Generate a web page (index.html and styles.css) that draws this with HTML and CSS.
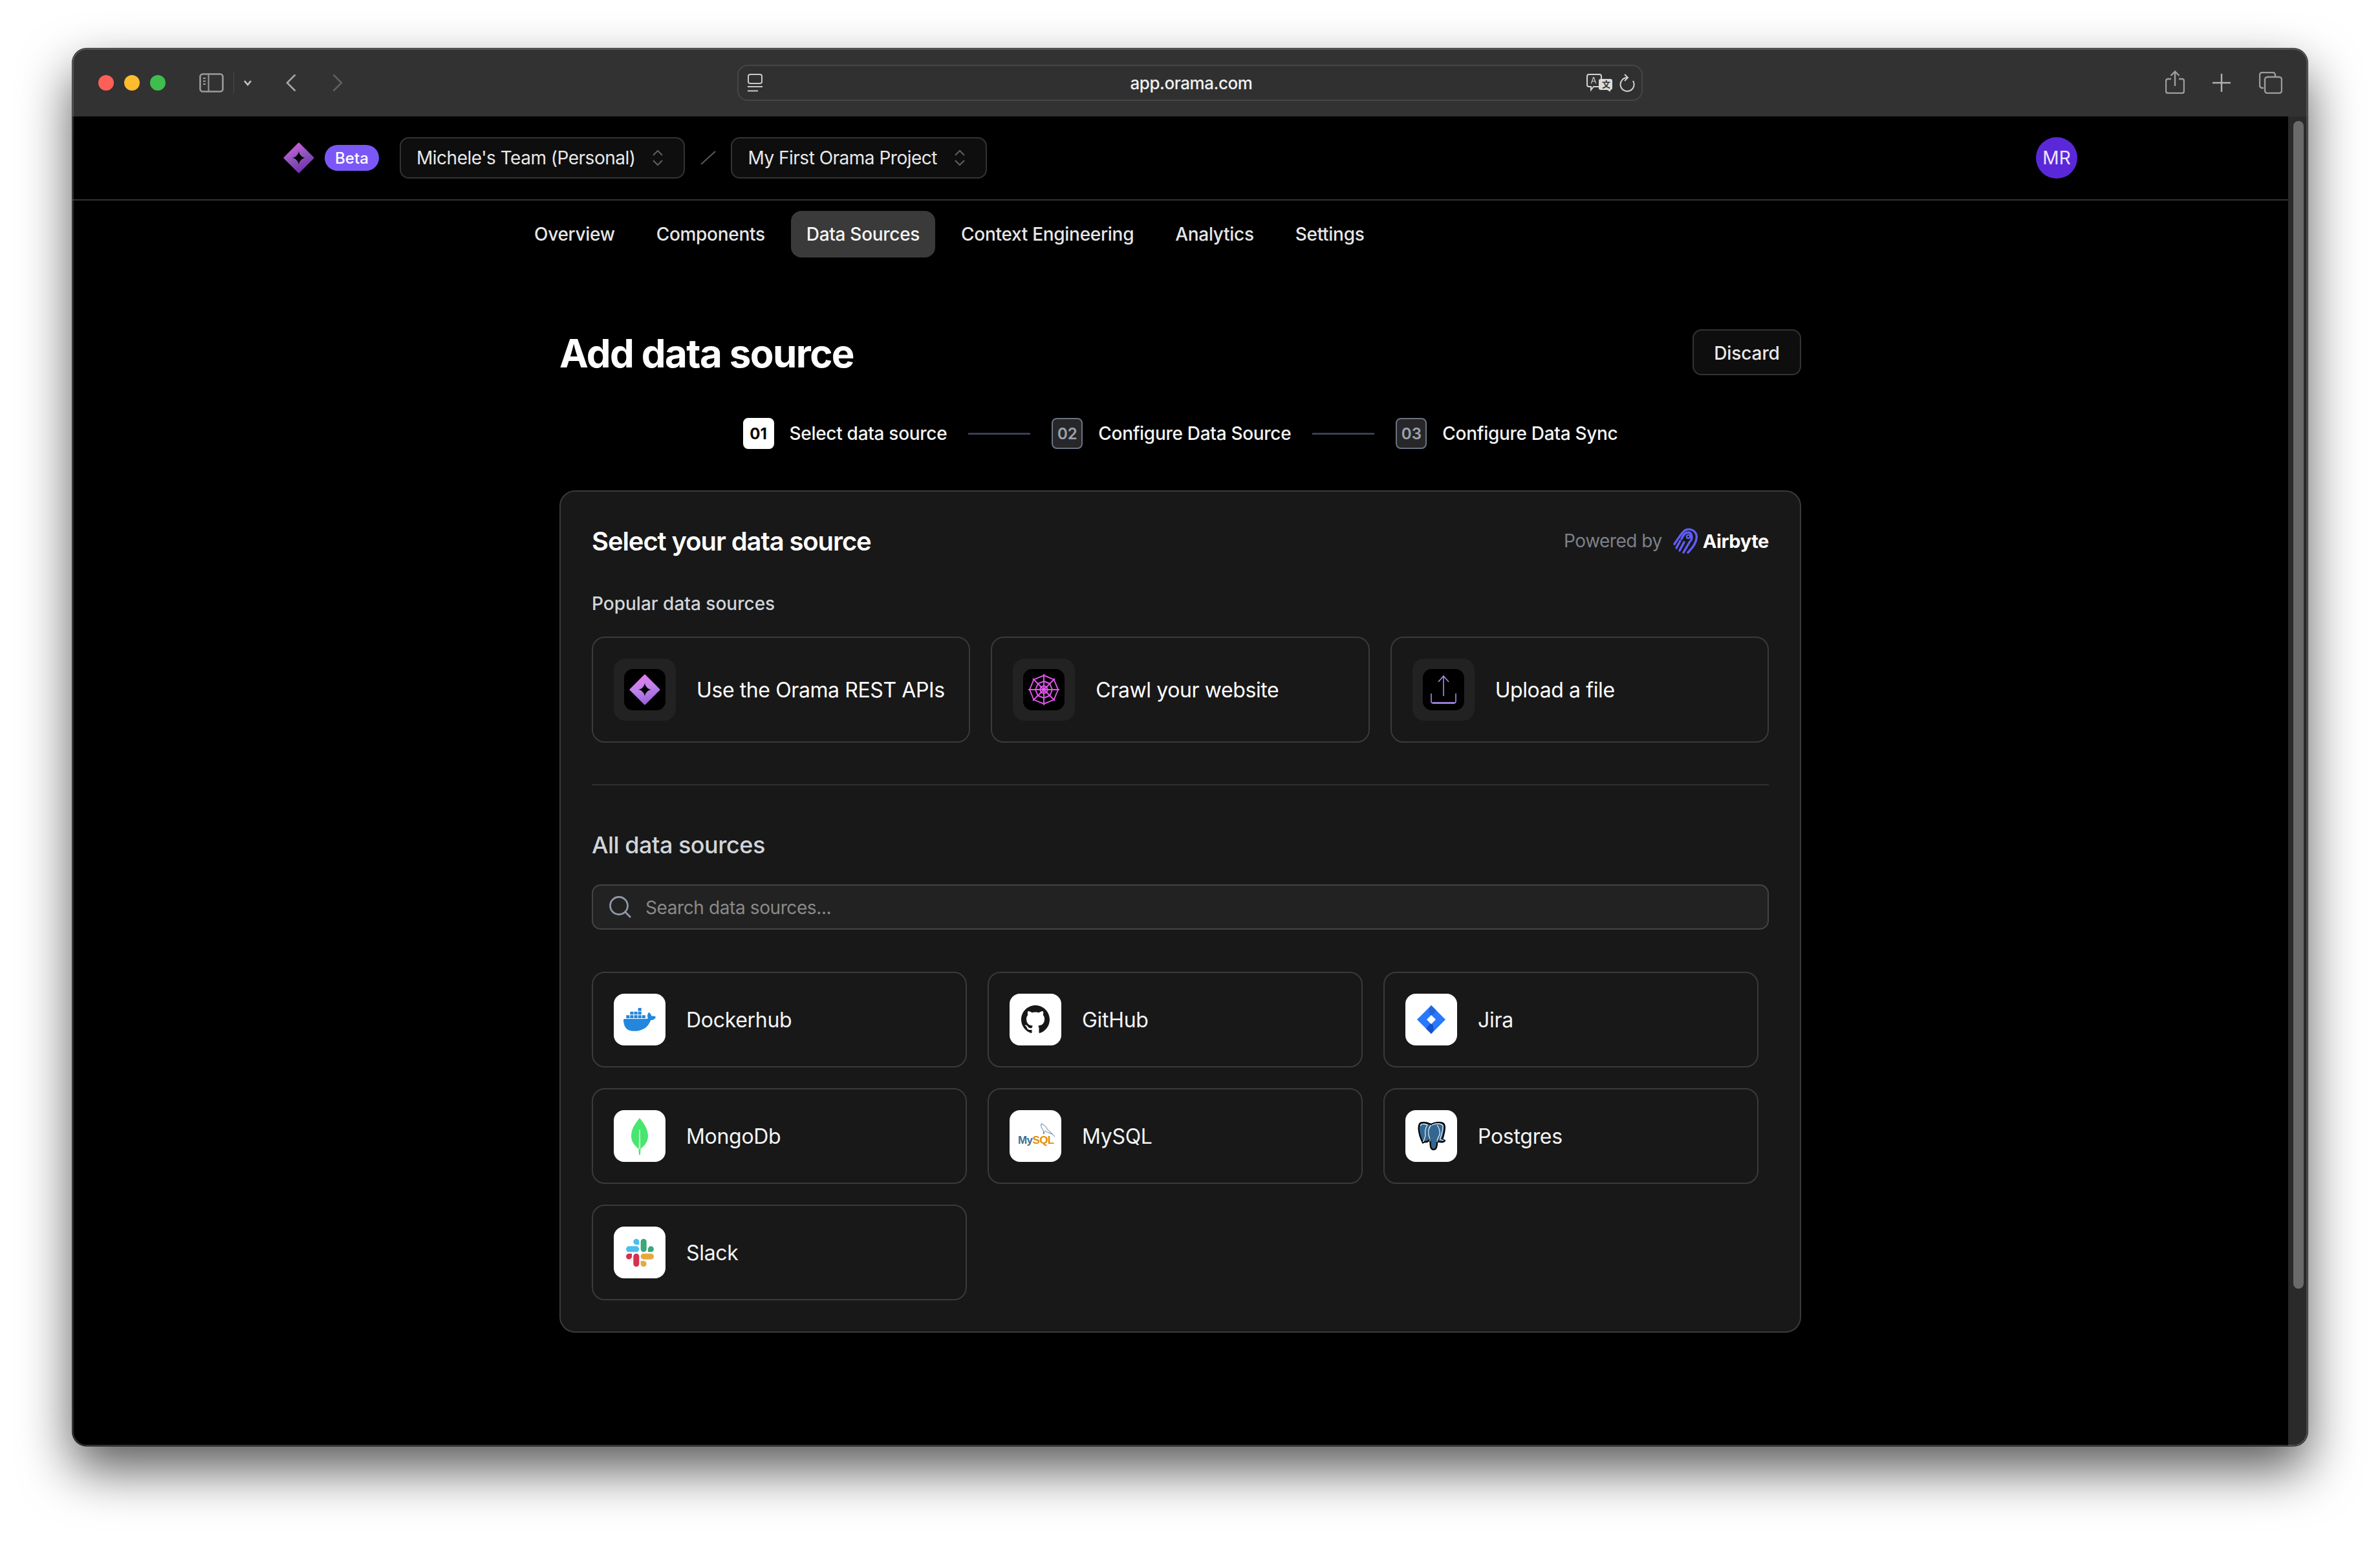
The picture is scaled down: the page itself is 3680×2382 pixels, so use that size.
FILE: index.html
```html
<!DOCTYPE html>
<html lang="en">
<head>
<meta charset="utf-8">
<title>Add data source</title>
<link rel="stylesheet" href="styles.css">
</head>
<body>
<svg class="defs" width="0" height="0" aria-hidden="true">
  <defs>
    <linearGradient id="oramaDark" x1="0.2" y1="0" x2="0.7" y2="1">
      <stop offset="0" stop-color="#dc5fe6"/><stop offset="0.5" stop-color="#8a55b8"/><stop offset="1" stop-color="#7428b0"/>
    </linearGradient>
    <linearGradient id="oramaLight" x1="0.3" y1="0" x2="0.6" y2="1">
      <stop offset="0" stop-color="#ec78f2"/><stop offset="0.5" stop-color="#bb84e8"/><stop offset="1" stop-color="#9a5cdc"/>
    </linearGradient>
  </defs>
</svg>
<div class="window">
  <div class="toolbar">
    <div class="tool-left">
      <div class="lights"><span class="light red"></span><span class="light yellow"></span><span class="light green"></span></div>
      <svg class="ic-sidebar" viewBox="0 0 38 30" fill="none" stroke="#9b9b9b"><rect x="1.5" y="1.5" width="35" height="27" rx="4" stroke-width="2.6"/><path d="M14.5 2v26" stroke-width="2"/><path d="M6 8h4M6 12.5h4M6 17h4" stroke-width="2"/></svg>
      <span class="tool-sep"></span>
      <svg class="ic-caret" viewBox="0 0 14 10" fill="none" stroke="#c4c4c4" stroke-width="2.6"><path d="M2 2l5 6 5-6"/></svg>
      <svg class="ic-back" viewBox="0 0 16 28" fill="none" stroke="#a6a6a6" stroke-width="2.6"><path d="M14.5 1.5L2 14l12.5 12.5"/></svg>
      <svg class="ic-forward" viewBox="0 0 16 28" fill="none" stroke="#5f5f5f" stroke-width="2.6"><path d="M1.5 1.5L14 14 1.5 26.5"/></svg>
    </div>
    <div class="address">
      <svg class="ic-page" viewBox="0 0 23 28" fill="none" stroke="#c9c9c9" stroke-width="2"><rect x="1" y="1" width="21" height="14" rx="3"/><path d="M0 20h23M0 26.500h16"/></svg>
      <span class="url">app.orama.com</span>
      <div class="addr-right">
        <svg class="ic-translate" viewBox="0 0 40 28"><path d="M4 1h16a3 3 0 0 1 3 3v13a3 3 0 0 1-3 3H11l-4 5v-5H4a3 3 0 0 1-3-3V4a3 3 0 0 1 3-3z" fill="#323232" stroke="#d4d4d4" stroke-width="2"/><text x="6.500" y="15" class="tr-a">A</text><path d="M22 8h15a3 3 0 0 1 3 3v11a3 3 0 0 1-3 3v3l-5-3h-10a3 3 0 0 1-3-3V11a3 3 0 0 1 3-3z" fill="#dcdcdc"/><text x="24" y="21" class="tr-b">文</text></svg>
        <svg class="ic-reload" viewBox="0 0 24 28" fill="none" stroke="#d0d0d0" stroke-width="2"><path d="M21 11A10.500 10.500 0 1 1 12 6"/><path d="M8 1l5 5-5 5"/></svg>
      </div>
    </div>
    <div class="tool-right">
      <svg class="ic-share" viewBox="0 0 30 36" fill="none" stroke="#9d9d9d" stroke-width="2.400"><path d="M9 13H4a3 3 0 0 0-3 3v16a3 3 0 0 0 3 3h22a3 3 0 0 0 3-3V16a3 3 0 0 0-3-3h-5"/><path d="M15 24V2M8.500 8L15 1.500 21.500 8"/></svg>
      <svg class="ic-plus" viewBox="0 0 28 28" fill="none" stroke="#b0b0b0" stroke-width="2.400"><path d="M14 0v28M0 14h28"/></svg>
      <svg class="ic-tabs" viewBox="0 0 36 34" fill="none" stroke="#9d9d9d" stroke-width="2.400"><path d="M7 25H5a4 4 0 0 1-4-4V5a4 4 0 0 1 4-4h16a4 4 0 0 1 4 4v2"/><rect x="9" y="8" width="26" height="25" rx="4"/></svg>
    </div>
  </div>

  <div class="viewport">
    <div class="main">
      <header class="topbar">
        <svg class="logo" viewBox="0 0 48 48"><path fill="url(#oramaDark)" fill-rule="evenodd" d="M22.500 1.500Q24 -.5 25.500 1.500L46.500 22.500Q48.500 24 46.500 25.500L25.500 46.500Q24 48.500 22.500 46.500L1.500 25.500Q-.5 24 1.500 22.500ZM24 13.500C24.500 19 29 23.500 34.500 24C29 24.500 24.500 29 24 34.500C23.500 29 19 24.500 13.500 24C19 23.500 23.500 19 24 13.500Z"/></svg>
        <span class="beta">Beta</span>
        <div class="select team">
          <span>Michele's Team (Personal)</span>
          <svg class="updown" viewBox="0 0 18 26" fill="none" stroke="#5d5d5d" stroke-width="2.200"><path d="M2 9l7-7 7 7M2 17l7 7 7-7"/></svg>
        </div>
        <svg class="slash" viewBox="0 0 24 22" fill="none" stroke="#5a5a5a" stroke-width="2"><path d="M1 21L23 1"/></svg>
        <div class="select">
          <span>My First Orama Project</span>
          <svg class="updown" viewBox="0 0 18 26" fill="none" stroke="#5d5d5d" stroke-width="2.200"><path d="M2 9l7-7 7 7M2 17l7 7 7-7"/></svg>
        </div>
        <span class="avatar">MR</span>
      </header>

      <nav class="nav">
        <a class="nav-item">Overview</a>
        <a class="nav-item">Components</a>
        <a class="nav-item active">Data Sources</a>
        <a class="nav-item">Context Engineering</a>
        <a class="nav-item">Analytics</a>
        <a class="nav-item">Settings</a>
      </nav>

      <div class="page">
        <div class="title-row">
          <h1>Add data source</h1>
          <button class="discard">Discard</button>
        </div>

        <div class="stepper">
          <span class="step-no current">01</span><span class="step-label">Select data source</span>
          <span class="step-line"></span>
          <span class="step-no">02</span><span class="step-label">Configure Data Source</span>
          <span class="step-line"></span>
          <span class="step-no">03</span><span class="step-label">Configure Data Sync</span>
        </div>

        <section class="panel">
          <div class="panel-head">
            <h2>Select your data source</h2>
            <div class="powered">
              <span>Powered by</span>
              <svg class="ic-airbyte" viewBox="0 0 40 40" fill="none" stroke="#615eff" stroke-width="3.400" stroke-linecap="round"><path d="M24 38C32 30 39 20 37 11C35 3 25 0 19 4C13 9 7 19 3 25"/><path d="M17 38L27 21"/><path d="M11 35L18 22"/><path d="M6 31L12 20"/><path d="M14 17C17 10 20 7 24 7C30 7 31 14 29 19"/><circle cx="24.500" cy="13.500" r="2.600" stroke-width="2.400"/></svg>
              <span class="airbyte">Airbyte</span>
            </div>
          </div>
          <h3 class="label">Popular data sources</h3>
          <div class="popular">
            <div class="pop-card">
              <div class="pop-icon"><div class="pop-inner">
                <svg class="glyph48" viewBox="0 0 48 48"><path fill="url(#oramaLight)" fill-rule="evenodd" d="M22.500 1.500Q24 -.5 25.500 1.500L46.500 22.500Q48.500 24 46.500 25.500L25.500 46.500Q24 48.500 22.500 46.500L1.500 25.500Q-.5 24 1.500 22.500ZM24 13.500C24.500 19 29 23.500 34.500 24C29 24.500 24.500 29 24 34.500C23.500 29 19 24.500 13.500 24C19 23.500 23.500 19 24 13.500Z"/></svg>
              </div></div>
              <span class="pop-text">Use the Orama REST APIs</span>
            </div>
            <div class="pop-card">
              <div class="pop-icon"><div class="pop-inner">
                <svg class="glyph48" viewBox="0 0 48 48" fill="none" stroke="#e257ef" stroke-width="1.900"><path d="M24 2L39.600 8.400 46 24 39.600 39.600 24 46 8.400 39.600 2 24 8.400 8.400Z"/><path d="M24 11L33.200 14.800 37 24 33.200 33.200 24 37 14.800 33.200 11 24 14.800 14.800Z"/><path d="M24 0V48M0 24H48M7 7L41 41M41 7L7 41"/><path d="M24 18L28.200 19.800 30 24 28.200 28.200 24 30 19.800 28.200 18 24 19.800 19.800Z"/></svg>
              </div></div>
              <span class="pop-text">Crawl your website</span>
            </div>
            <div class="pop-card">
              <div class="pop-icon"><div class="pop-inner">
                <svg class="glyph48" viewBox="0 0 48 48" fill="none" stroke="#a78bf0" stroke-width="1.600"><path d="M24 34V4M16 12L24 3L32 12"/><path d="M5 30V42a3 3 0 0 0 3 3H40a3 3 0 0 0 3-3V30"/><path d="M7 44.500H41" stroke-width="2.400"/></svg>
              </div></div>
              <span class="pop-text">Upload a file</span>
            </div>
          </div>

          <hr class="divider">

          <h3 class="all-title">All data sources</h3>
          <div class="search">
            <svg class="ic-search" viewBox="0 0 34 34" fill="none" stroke="#8f97a6" stroke-width="2.800"><circle cx="15" cy="15" r="13.500"/><path d="M25 25L33 33"/></svg>
            <span class="placeholder">Search data sources...</span>
          </div>

          <div class="sources">
            <div class="src-card">
              <div class="src-icon"><svg class="g-docker" viewBox="0 3.400 24 17.300"><path fill="#2387de" d="M13.983 11.078h2.119a.186.186 0 00.186-.185V9.006a.186.186 0 00-.186-.186h-2.119a.185.185 0 00-.185.185v1.888c0 .102.083.185.185.185m-2.954-5.43h2.118a.186.186 0 00.186-.186V3.574a.186.186 0 00-.186-.185h-2.118a.185.185 0 00-.185.185v1.888c0 .102.082.185.185.186m0 2.716h2.118a.187.187 0 00.186-.186V6.29a.186.186 0 00-.186-.185h-2.118a.185.185 0 00-.185.185v1.887c0 .102.082.185.185.186m-2.93 0h2.12a.186.186 0 00.184-.186V6.29a.185.185 0 00-.185-.185H8.1a.185.185 0 00-.185.185v1.887c0 .102.083.185.185.186m-2.964 0h2.119a.186.186 0 00.185-.186V6.29a.185.185 0 00-.185-.185H5.136a.186.186 0 00-.186.185v1.887c0 .102.084.185.186.186m5.893 2.715h2.118a.186.186 0 00.186-.185V9.006a.186.186 0 00-.186-.186h-2.118a.185.185 0 00-.185.185v1.888c0 .102.082.185.185.185m-2.93 0h2.12a.185.185 0 00.184-.185V9.006a.185.185 0 00-.184-.186h-2.12a.185.185 0 00-.184.185v1.888c0 .102.083.185.185.185m-2.964 0h2.119a.185.185 0 00.185-.185V9.006a.185.185 0 00-.184-.186h-2.12a.186.186 0 00-.186.186v1.887c0 .102.084.185.186.185m-2.92 0h2.12a.185.185 0 00.184-.185V9.006a.185.185 0 00-.184-.186h-2.12a.185.185 0 00-.184.185v1.888c0 .102.082.185.185.185M23.763 9.89c-.065-.051-.672-.51-1.954-.51-.338.001-.676.03-1.01.087-.248-1.7-1.653-2.53-1.716-2.566l-.344-.199-.226.327c-.284.438-.49.922-.612 1.43-.23.97-.09 1.882.403 2.661-.595.332-1.55.413-1.744.42H.751a.751.751 0 00-.75.748 11.376 11.376 0 00.692 4.062c.545 1.428 1.355 2.48 2.41 3.124 1.18.723 3.1 1.137 5.275 1.137.983.003 1.963-.086 2.93-.266a12.248 12.248 0 003.823-1.389c.98-.567 1.86-1.288 2.61-2.136 1.252-1.418 1.998-2.997 2.553-4.4h.221c1.372 0 2.215-.549 2.68-1.009.309-.293.55-.65.707-1.046l.098-.288Z"/></svg></div>
              <span class="src-text">Dockerhub</span>
            </div>
            <div class="src-card">
              <div class="src-icon"><svg class="g-github" viewBox="0 0 16 16"><path fill="#181717" d="M8 0C3.580 0 0 3.580 0 8c0 3.540 2.290 6.530 5.470 7.590.4.070.55-.170.55-.380 0-.190-.010-.820-.010-1.490-2.010.370-2.530-.490-2.690-.940-.090-.230-.480-.940-.820-1.130-.280-.150-.680-.520-.010-.530.630-.010 1.080.580 1.230.820.720 1.210 1.870.870 2.330.660.070-.520.280-.870.510-1.070-1.780-.200-3.640-.890-3.640-3.950 0-.870.310-1.590.820-2.150-.080-.200-.360-1.020.080-2.120 0 0 .670-.210 2.200.820.640-.180 1.320-.270 2-.270.680 0 1.360.090 2 .270 1.530-1.040 2.200-.820 2.200-.820.440 1.100.160 1.920.080 2.120.510.560.820 1.270.820 2.150 0 3.070-1.870 3.750-3.650 3.950.290.250.540.730.540 1.480 0 1.070-.010 1.930-.010 2.200 0 .210.150.460.550.380A8.013 8.013 0 0016 8c0-4.420-3.580-8-8-8z"/></svg></div>
              <span class="src-text">GitHub</span>
            </div>
            <div class="src-card">
              <div class="src-icon"><svg class="g-jira" viewBox="0 0 44 44"><path fill="#2979ff" d="M22 0L44 22 22 44 0 22Z"/><path fill="#2267de" d="M22 0C17 5 17 11 22 16.500L27 12 30 8Z"/><path fill="#1650c8" d="M22 44C27 39 27 33 22 27.500L17 32 14 36Z"/><path fill="#fff" d="M22 15L29 22 22 29 15 22Z"/></svg></div>
              <span class="src-text">Jira</span>
            </div>
            <div class="src-card">
              <div class="src-icon"><svg class="g-mongo" viewBox="0 0 26 57"><path fill="#47e66f" d="M13 0C16 5 26 14 26 28C26 38 19 44 14.500 48L14 57H12L11.500 48C7 44 0 38 0 28C0 14 10 5 13 0Z"/><path fill="#c6f6d0" d="M12.200 18H13.800L14.300 47L13 49L11.700 47Z"/></svg></div>
              <span class="src-text">MongoDb</span>
            </div>
            <div class="src-card">
              <div class="src-icon src-mysql">
                <svg class="g-dolphin" viewBox="0 0 23 22" fill="none" stroke="#3e6e93" stroke-width="0.900"><path d="M1 1C5 2 8 5 10 9C12 13 17 14 18 17C19 18 21 20 22 21M1 1C0 5 2 9 4 11C5 13 4 15 5 17C5 14 7 12 8 12C9 14 13 15 18 17"/></svg>
                <span class="mysql-word"><span class="my">My</span><span class="sql">SQL</span></span>
              </div>
              <span class="src-text">MySQL</span>
            </div>
            <div class="src-card">
              <div class="src-icon"><svg class="g-pg" viewBox="0 0 43 44"><path fill="#336791" stroke="#000" stroke-width="2.200" d="M4 2C11-.5 17 2.500 21 4C27 .5 38-.5 41 4C43.500 9 40 22 38 27L42 29C41 31.500 36 31.500 33 31L31 29.500L30 33C30 38 28.500 43 24.500 43C20.500 43 19.500 38 19.500 33L19 27.500C15 32 12.500 31.500 11 31L8 32.500L6 28C3 22-1 7 4 2Z"/><path fill="none" stroke="#fff" stroke-width="1.100" d="M4 6C6 3 11 2.500 15 5C12 9 11 15 12 22M21 5C17 9 16 14 17 20C18 25 20 26 19 30M22 5C28 2 36 2 39 6C39 12 37 20 35 25C34 28 36 28 40 28.500M30 5C33 9 35 14 34 20C32 24 30 26 30 31M12 22C10 25 11 29 8 31"/></svg></div>
              <span class="src-text">Postgres</span>
            </div>
            <div class="src-card">
              <div class="src-icon"><svg class="g-slack" viewBox="0 0 24 24"><path fill="#d6304f" d="M5.042 15.165a2.528 2.528 0 0 1-2.520 2.523A2.528 2.528 0 0 1 0 15.165a2.527 2.527 0 0 1 2.522-2.520h2.520v2.520zM6.313 15.165a2.527 2.527 0 0 1 2.521-2.520 2.527 2.527 0 0 1 2.521 2.520v6.313A2.528 2.528 0 0 1 8.834 24a2.528 2.528 0 0 1-2.521-2.522v-6.313z"/><path fill="#4bbdf0" d="M8.834 5.042a2.528 2.528 0 0 1-2.521-2.520A2.528 2.528 0 0 1 8.834 0a2.528 2.528 0 0 1 2.521 2.522v2.520H8.834zM8.834 6.313a2.528 2.528 0 0 1 2.521 2.521 2.528 2.528 0 0 1-2.521 2.521H2.522A2.528 2.528 0 0 1 0 8.834a2.528 2.528 0 0 1 2.522-2.521h6.312z"/><path fill="#3aa878" d="M18.956 8.834a2.528 2.528 0 0 1 2.522-2.521A2.528 2.528 0 0 1 24 8.834a2.528 2.528 0 0 1-2.522 2.521h-2.522V8.834zM17.688 8.834a2.528 2.528 0 0 1-2.523 2.521 2.527 2.527 0 0 1-2.520-2.521V2.522A2.527 2.527 0 0 1 15.165 0a2.528 2.528 0 0 1 2.523 2.522v6.312z"/><path fill="#e5a93c" d="M15.165 18.956a2.528 2.528 0 0 1 2.523 2.522A2.528 2.528 0 0 1 15.165 24a2.527 2.527 0 0 1-2.520-2.522v-2.522h2.520zM15.165 17.688a2.527 2.527 0 0 1-2.520-2.523 2.526 2.526 0 0 1 2.520-2.520h6.313A2.527 2.527 0 0 1 24 15.165a2.528 2.528 0 0 1-2.522 2.523h-6.313z"/></svg></div>
              <span class="src-text">Slack</span>
            </div>
          </div>
        </section>
      </div>
    </div>
    <div class="scrollbar"><div class="thumb"></div></div>
  </div>
</div>
</body>
</html>
```

FILE: styles.css
```css
* { box-sizing: border-box; }
html, body { margin: 0; padding: 0; }
body {
  width: 3680px;
  height: 2382px;
  padding: 75px 112px 147px;
  background: #fff;
  overflow: hidden;
  font-family: Inter, "Noto Sans", sans-serif;
  color: #fff;
}
.defs { position: absolute; }
svg { display: block; flex: none; }

.window {
  position: relative;
  width: 3456px;
  height: 2160px;
  border-radius: 22px;
  overflow: hidden;
  background: #000;
  display: flex;
  flex-direction: column;
  box-shadow: 0 0 0 1px rgba(0,0,0,.75), 0 36px 80px rgba(0,0,0,.65);
}
.window::after {
  content: "";
  position: absolute;
  inset: 0;
  border-radius: 22px;
  box-shadow: inset 0 0 0 1.5px rgba(255,255,255,.25);
  pointer-events: none;
}

/* browser toolbar */
.toolbar {
  height: 105px;
  flex: none;
  background: #323232;
  display: grid;
  grid-template-columns: 1fr 1400px 1fr;
  align-items: center;
}
.tool-left { display: flex; align-items: center; padding-left: 40px; }
.lights { display: flex; gap: 16px; margin-right: 52px; }
.light { width: 24px; height: 24px; border-radius: 50%; }
.red { background: #ff5f57; }
.yellow { background: #febc2e; }
.green { background: #3fbd4d; }
.ic-sidebar { width: 38px; height: 30px; }
.tool-sep { width: 1px; height: 32px; background: #4a4a4a; margin: 0 14px 0 15px; }
.ic-caret { width: 14px; height: 10px; }
.ic-back { width: 16px; height: 28px; margin-left: 52px; }
.ic-forward { width: 16px; height: 28px; margin-left: 56px; }

.address {
  height: 56px;
  margin-top: 1px;
  border: 2px solid #464646;
  border-radius: 16px;
  background: #303030;
  display: grid;
  grid-template-columns: 1fr auto 1fr;
  align-items: center;
  padding: 0 10px 0 14px;
}
.ic-page { width: 23px; height: 28px; }
.url { font-size: 26px; font-weight: 500; color: #f0f0f0; line-height: 32px; letter-spacing: -0.45px; margin-top: 2px; }
.addr-right { display: flex; justify-content: flex-end; gap: 11px; align-items: center; }
.ic-translate { width: 40px; height: 28px; }
.tr-a { font-size: 13px; fill: #d4d4d4; font-family: Inter, sans-serif; }
.tr-b { font-size: 13px; fill: #323232; font-family: "Noto Sans CJK SC", sans-serif; font-weight: 700; }
.ic-reload { width: 24px; height: 28px; }

.tool-right { display: flex; justify-content: flex-end; align-items: center; padding-right: 39px; }
.ic-share { width: 30px; height: 36px; margin-top: -2px; }
.ic-plus { width: 28px; height: 28px; margin-left: 43px; }
.ic-tabs { width: 36px; height: 34px; margin-left: 44px; }

/* viewport */
.viewport { flex: 1; display: flex; min-height: 0; }
.main { flex: 1; min-width: 0; background: #000; }
.scrollbar { width: 30px; flex: none; background: #2a2a2a; padding: 7px 0 0 8px; }
.thumb { width: 16px; height: 1805px; border-radius: 8px; background: #6a6a6a; }

/* app header */
.topbar {
  height: 130px;
  padding: 0 326px;
  border-bottom: 2px solid #333;
  display: flex;
  align-items: center;
}
.logo { width: 48px; height: 48px; }
.beta {
  margin-left: 16px;
  width: 84px;
  height: 40px;
  border-radius: 20px;
  background: #7b57f7;
  font-size: 24px;
  font-weight: 500;
  display: flex;
  align-items: center;
  justify-content: center;
}
.select {
  height: 64px;
  border: 2px solid #333;
  border-radius: 14px;
  background: #0e0e0e;
  display: flex;
  align-items: center;
  padding: 0 31px 0 24px;
  font-size: 28px;
  letter-spacing: -0.5px;
  color: #e8e8e8;
  gap: 26px;
}
.team { margin-left: 32px; }
.updown { width: 18px; height: 26px; }
.slash { width: 24px; height: 22px; margin: 0 23px 0 24px; }
.avatar {
  margin-left: auto;
  width: 64px;
  height: 64px;
  border-radius: 50%;
  background: #5b28d9;
  font-size: 28px;
  display: flex;
  align-items: center;
  justify-content: center;
  color: #ece6ff;
}

/* tabs */
.nav { display: flex; gap: 16px; padding: 16px 0 0 690px; }
.nav-item {
  height: 72px;
  padding: 0 24px;
  border-radius: 16px;
  font-size: 28px;
  font-weight: 500;
  letter-spacing: -0.3px;
  color: #e6e6e6;
  display: flex;
  align-items: center;
}
.nav-item.active { background: #3a3a3a; color: #f4f4f4; }

/* page */
.page { width: 1920px; margin: 0 auto; padding-top: 111px; }
.title-row { display: flex; justify-content: space-between; align-items: center; height: 71px; }
h1 { margin: 3px 0 0; font-size: 60px; line-height: 71px; font-weight: 700; letter-spacing: -1.6px; color: #fff; }
.discard {
  width: 168px;
  height: 71px;
  border: 2px solid #333;
  border-radius: 14px;
  background: #0e0e0e;
  color: #e8e8e8;
  font: 500 28px Inter, sans-serif;
  letter-spacing: -0.1px;
  padding: 2px 0 0;
}

.stepper { margin-top: 66px; height: 48px; display: flex; justify-content: center; align-items: center; }
.step-no {
  width: 48px;
  height: 48px;
  border: 2px solid #6b7280;
  border-radius: 8px;
  background: #27272a;
  color: #9ca3af;
  font-size: 24px;
  font-weight: 600;
  display: flex;
  align-items: center;
  justify-content: center;
}
.step-no.current { background: #fff; border-color: #fff; color: #000; font-weight: 700; }
.step-label { margin-left: 24px; font-size: 28px; font-weight: 500; letter-spacing: -0.3px; color: #f4f4f4; }
.step-line { width: 96px; height: 3px; background: #374151; margin: 0 33px; }

.panel {
  margin-top: 64px;
  height: 1302px;
  background: #181818;
  border: 2px solid #3a3a3a;
  border-radius: 24px;
  padding: 48px;
}
.panel-head { height: 56px; display: flex; justify-content: space-between; align-items: center; }
h2 { margin: 0; font-size: 40px; font-weight: 600; letter-spacing: -1.1px; color: #fff; }
.powered { display: flex; align-items: center; font-size: 28px; letter-spacing: -0.5px; color: #7c808a; }
.ic-airbyte { width: 40px; height: 40px; margin-left: 16px; }
.airbyte { margin-left: 7px; color: #fff; font-size: 29px; font-weight: 700; letter-spacing: -0.4px; }

.label { margin: 52px 0 34px; font-size: 28px; line-height: 34px; font-weight: 500; color: #d1d5db; }
.popular { display: grid; grid-template-columns: repeat(3, 1fr); gap: 32px; }
.pop-card {
  height: 164px;
  border: 2px solid #3a3a3a;
  border-radius: 20px;
  padding: 32px;
  display: flex;
  align-items: center;
  gap: 32px;
}
.pop-icon {
  width: 96px;
  height: 96px;
  border-radius: 18px;
  background: #222;
  display: flex;
  align-items: center;
  justify-content: center;
}
.pop-inner {
  width: 64px;
  height: 64px;
  border-radius: 14px;
  background: #000;
  display: flex;
  align-items: center;
  justify-content: center;
}
.glyph48 { width: 48px; height: 48px; }
.pop-text { font-size: 32px; font-weight: 400; letter-spacing: -0.4px; white-space: nowrap; color: #fff; }

.divider { margin: 64px 0 70px; height: 2px; border: 0; background: #2e2e2e; }
.all-title { margin: 0 0 39px; font-size: 36px; line-height: 44px; font-weight: 500; letter-spacing: -0.5px; color: #d1d5db; }
.search {
  height: 70px;
  border: 2px solid #444;
  border-radius: 14px;
  background: #222;
  display: flex;
  align-items: center;
  padding-left: 25px;
  gap: 22px;
}
.ic-search { width: 34px; height: 34px; }
.placeholder { font-size: 28px; letter-spacing: -0.4px; color: #8a8a8a; margin-top: 1px; }

.sources { margin-top: 65px; display: grid; grid-template-columns: repeat(3, 580px); grid-auto-rows: 148px; gap: 32px; }
.src-card {
  border: 2px solid #3a3a3a;
  border-radius: 20px;
  padding: 32px;
  display: flex;
  align-items: center;
  gap: 32px;
}
.src-icon {
  position: relative;
  width: 80px;
  height: 80px;
  border-radius: 16px;
  background: #fff;
  display: flex;
  align-items: center;
  justify-content: center;
}
.src-text { font-size: 32px; font-weight: 400; letter-spacing: -0.3px; color: #f4f4f4; }
.g-docker { width: 50px; height: 36px; }
.g-github { width: 44px; height: 44px; }
.g-jira { width: 44px; height: 44px; }
.g-mongo { width: 26px; height: 57px; }
.g-pg { width: 43px; height: 44px; }
.g-slack { width: 43px; height: 43px; }
.src-mysql { flex-direction: column; align-items: flex-end; justify-content: flex-start; padding: 20px 9px 0 0; }
.g-dolphin { width: 23px; height: 22px; }
.mysql-word { position: absolute; left: 13px; top: 37px; font: 600 17px/20px "Liberation Sans", sans-serif; letter-spacing: -0.6px; white-space: nowrap; }
.my { color: #3e6e93; }
.sql { color: #e48e00; }
```
